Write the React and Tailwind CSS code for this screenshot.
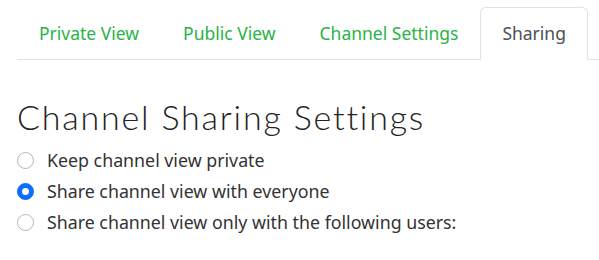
import React, { useState } from 'react';

const tabs = ['Private View', 'Public View', 'Channel Settings', 'Sharing'];

const options = [
  { id: 'private', label: 'Keep channel view private' },
  { id: 'everyone', label: 'Share channel view with everyone' },
  { id: 'users', label: 'Share channel view only with the following users:' },
];

const App = () => {
  const [activeTab, setActiveTab] = useState('Sharing');
  const [sharing, setSharing] = useState('everyone');

  return (
    <div className="min-h-[260px] overflow-hidden bg-white pl-[17px] pt-[7px] font-['Noto_Sans',sans-serif] text-[#333]">
      {/* tab strip */}
      <nav className="flex border-b border-[#dee2e6]">
        {tabs.map(tab => (
          <button
            key={tab}
            onClick={() => setActiveTab(tab)}
            className={`-mb-px h-[53px] shrink-0 whitespace-nowrap rounded-t-[6px] border px-[21px] text-[17.5px] leading-none ${
              activeTab === tab
                ? 'border-[#dee2e6] border-b-white bg-white text-[#495057]'
                : 'border-transparent text-[#28b446]'
            }`}
          >
            {tab}
          </button>
        ))}
      </nav>

      <h2 className="mt-[40px] font-['Lato',sans-serif] text-[34px] font-light leading-none tracking-[1.8px] text-[#222]">
        Channel Sharing Settings
      </h2>

      {/* sharing options */}
      <div className="mt-[11px] flex flex-col">
        {options.map(opt => (
          <label key={opt.id} className="flex h-[31px] cursor-pointer items-center gap-[13px] text-[17.8px]">
            <span
              className={`flex h-[17px] w-[17px] shrink-0 items-center justify-center rounded-full border ${
                sharing === opt.id ? 'border-[#0d6efd] bg-[#0d6efd]' : 'border-[#b5b5b5] bg-white'
              }`}
            >
              {sharing === opt.id && <span className="h-[7px] w-[7px] rounded-full bg-white" />}
            </span>
            <input
              type="radio"
              name="sharing"
              className="hidden"
              checked={sharing === opt.id}
              onChange={() => setSharing(opt.id)}
            />
            {opt.label}
          </label>
        ))}
      </div>
    </div>
  );
};

export default App;
